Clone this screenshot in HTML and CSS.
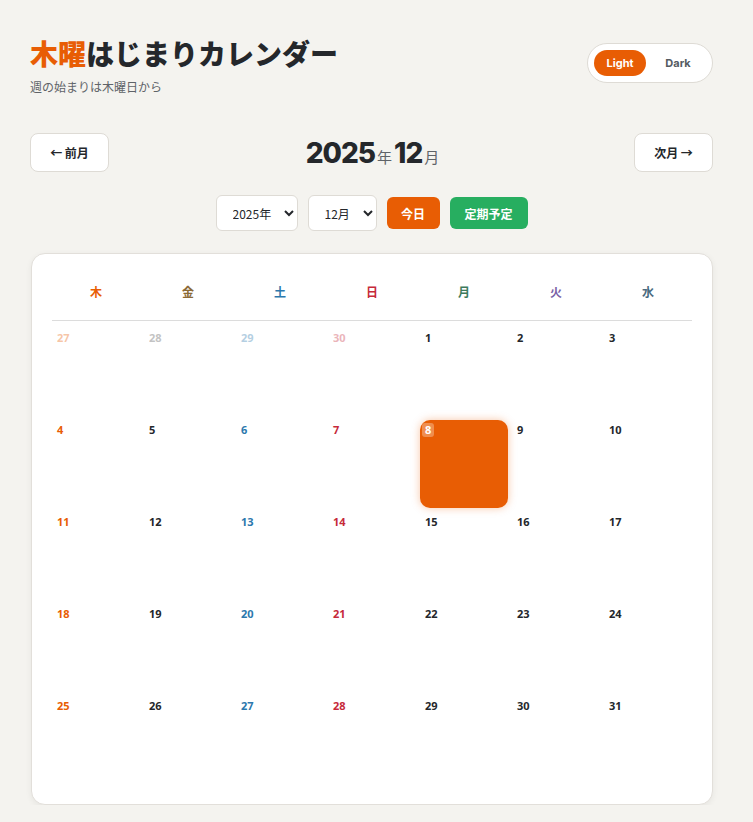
FILE: index.html
```html
<!DOCTYPE html>
<html lang="ja">
<head>
    <meta charset="UTF-8">
    <meta name="viewport" content="width=device-width, initial-scale=1.0">
    <title>木曜はじまりカレンダー</title>
    <link rel="stylesheet" href="styles.css">
</head>
<body>
<div class="page">

    <!-- Header -->
    <header class="top">
        <div>
            <h1 class="title"><span class="accent">木曜</span>はじまりカレンダー</h1>
            <p class="subtitle">週の始まりは木曜日から</p>
        </div>
        <div class="theme-toggle">
            <button class="theme-btn active">Light</button>
            <button class="theme-btn dark">Dark</button>
        </div>
    </header>

    <!-- Month navigation -->
    <div class="nav">
        <button class="nav-btn">← 前月</button>
        <div class="month-label">
            <span class="num">2025</span><span class="unit">年</span><span class="num">12</span><span class="unit">月</span>
        </div>
        <button class="nav-btn">次月 →</button>
    </div>

    <div class="controls">
        <select class="sel sel-year"><option>2025年</option></select>
        <select class="sel sel-month"><option>12月</option></select>
        <button class="btn btn-today">今日</button>
        <button class="btn btn-recur">定期予定</button>
    </div>

    <!-- Calendar -->
    <section class="card">
        <div class="weekdays">
            <div class="wd thu">木</div>
            <div class="wd fri">金</div>
            <div class="wd sat">土</div>
            <div class="wd sun">日</div>
            <div class="wd mon">月</div>
            <div class="wd tue">火</div>
            <div class="wd wed">水</div>
        </div>
        <div class="days" id="days"></div>
    </section>

</div>

<script>
    // --- Build December 2025, week starting Thursday ---
    const days = document.getElementById('days');
    const colClass = ['thu', 'fri', 'sat', 'sun', 'mon', 'tue', 'wed'];
    const cells = [27, 28, 29, 30];
    for (let d = 1; d <= 31; d++) cells.push(d);

    cells.forEach((d, i) => {
        const cell = document.createElement('div');
        cell.className = 'day ' + colClass[i % 7];
        if (i < 4) cell.classList.add('other');
        if (i >= 4 && d === 8) cell.classList.add('today');
        cell.innerHTML = '<span class="day-num">' + d + '</span>';
        days.appendChild(cell);
    });
</script>
</body>
</html>
```

FILE: styles.css
```css
* { box-sizing: border-box; }

body {
    margin: 0;
    background-color: #f4f3ef;
    font-family: "Noto Sans CJK JP", "Noto Sans", sans-serif;
    color: #24272b;
}

.page {
    width: 683px;
    margin-left: 30px;
    padding-top: 34px;
}

/* --- Header --- */
.top {
    display: flex;
    justify-content: space-between;
    align-items: flex-start;
}
.title {
    margin: 0;
    font-size: 28px;
    font-weight: 900;
    line-height: 38px;
}
.accent { color: #e85d04; }
.subtitle {
    margin: 7px 0 0;
    font-size: 12px;
    color: #5f6368;
    line-height: 16px;
}

.theme-toggle {
    margin-top: 9px;
    display: flex;
    gap: 4px;
    padding: 6px;
    background: #fff;
    border: 1px solid #dedbd5;
    border-radius: 22px;
    width: 126px;
    height: 40px;
}
.theme-btn {
    border: none;
    background: transparent;
    font-family: "Inter", "Noto Sans", sans-serif;
    font-size: 11px;
    font-weight: 700;
    color: #555b62;
    border-radius: 14px;
    width: 54px;
    height: 26px;
    padding: 0;
    cursor: pointer;
}
.theme-btn.dark { width: 58px; }
.theme-btn.active {
    background: #e85d04;
    color: #fff;
}

/* --- Navigation --- */
.nav {
    margin-top: 38px;
    display: flex;
    justify-content: space-between;
    align-items: center;
}
.nav-btn {
    width: 79px;
    height: 39px;
    background: #fff;
    border: 1px solid #dedbd5;
    border-radius: 8px;
    font-family: "Noto Sans CJK JP", sans-serif;
    font-size: 12px;
    font-weight: 700;
    color: #24272b;
    cursor: pointer;
}
.month-label {
    display: flex;
    align-items: baseline;
    margin-left: 4px;
}
.month-label .num {
    font-family: "Inter", "Noto Sans", sans-serif;
    font-size: 28px;
    font-weight: 800;
    letter-spacing: -1px;
}
.month-label .unit {
    font-size: 15px;
    color: #5f6368;
    margin: 0 2px 0 2px;
}

.controls {
    margin-top: 23px;
    display: flex;
    justify-content: center;
    align-items: center;
    gap: 10px;
}
.sel {
    height: 36px;
    background: #fff;
    border: 1px solid #dedbd5;
    border-radius: 6px;
    font-family: "Noto Sans CJK JP", sans-serif;
    font-size: 12px;
    color: #24272b;
    padding: 0 6px 0 12px;
}
.sel-year { width: 82px; }
.sel-month { width: 69px; }
.btn {
    height: 32px;
    border: none;
    border-radius: 6px;
    color: #fff;
    font-family: "Noto Sans CJK JP", sans-serif;
    font-size: 12px;
    font-weight: 700;
    cursor: pointer;
}
.btn-today { width: 53px; background: #e85d04; }
.btn-recur { width: 78px; background: #27ae60; }

/* --- Calendar card --- */
.card {
    margin-top: 22px;
    margin-left: 1px;
    background: #fff;
    border: 1px solid #e2dfda;
    border-radius: 14px;
    box-shadow: 0 2px 6px rgba(0,0,0,0.06);
    padding: 20px;
}

.weekdays {
    display: grid;
    grid-template-columns: repeat(7, 1fr);
    gap: 4px;
    border-bottom: 1px solid #dcdcdc;
}
.wd {
    text-align: center;
    font-size: 12px;
    font-weight: 700;
    height: 46px;
    padding-top: 10px;
    line-height: 16px;
}
.wd.thu { color: #e85d04; }
.wd.fri { color: #8c6a35; }
.wd.sat { color: #2c78ad; }
.wd.sun { color: #c62a3a; }
.wd.mon { color: #3d7b5c; }
.wd.tue { color: #7a5fa6; }
.wd.wed { color: #4a6b80; }

.days {
    margin-top: 7px;
    display: grid;
    grid-template-columns: repeat(7, 1fr);
    grid-auto-rows: 88px;
    gap: 4px;
}
.day {
    padding: 2px;
    border-radius: 10px;
    color: #24272b;
    font-size: 11px;
    line-height: 14px;
}
.day-num {
    display: inline-block;
    font-family: "Noto Sans", sans-serif;
    font-size: 11px;
    font-weight: 700;
    line-height: 14px;
    padding: 0 3px;
    border-radius: 3px;
}
.day.thu { color: #e85d04; }
.day.sat { color: #2c78ad; }
.day.sun { color: #c62a3a; }
.day.other .day-num { opacity: 0.35; }
.day.other.fri { color: #555; }

.day.today {
    background: #e85d04;
    color: #fff;
    box-shadow: 0 0 8px rgba(232,93,4,0.35);
}
.day.today .day-num {
    background: rgba(255,255,255,0.3);
}
```
